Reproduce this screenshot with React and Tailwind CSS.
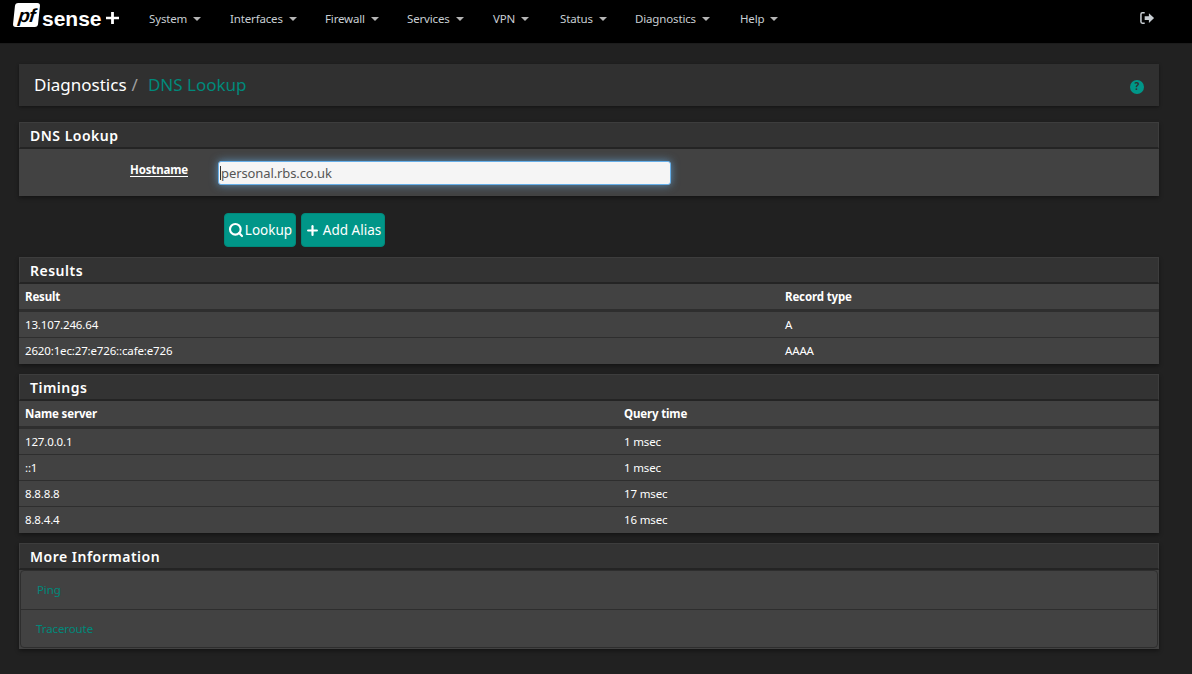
import { Search, Plus } from "lucide-react";

const menu = [
  ["System", "w-[81px]"],
  ["Interfaces", "w-[95px]"],
  ["Firewall", "w-[82px]"],
  ["Services", "w-[86px]"],
  ["VPN", "w-[67px]"],
  ["Status", "w-[75px]"],
  ["Diagnostics", "w-[105px]"],
  ["Help", "w-[60px]"],
];

function Heading({ children }) {
  return (
    <div className="h-[27px] bg-[#333333] border border-[#3d3d3d] border-b-2 border-b-[#242424] pl-[10px] flex items-center text-[14px] font-semibold tracking-[0.5px] text-white">
      {children}
    </div>
  );
}

function DataTable({ split, head, rows }) {
  return (
    <div className="bg-[#424242] text-[11.5px] tracking-[-0.15px] text-white">
      <div className="h-[28px] flex items-center border-b-[3px] border-[#2e2e2e] font-bold pl-[6px]">
        <div className={split}>{head[0]}</div>
        <div>{head[1]}</div>
      </div>
      {rows.map((r) => (
        <div key={r[0]} className="h-[26px] flex items-center border-b border-[#2e2e2e] last:border-b-0 pl-[6px]">
          <div className={split}>{r[0]}</div>
          <div>{r[1]}</div>
        </div>
      ))}
    </div>
  );
}

export default function App() {
  return (
    <div className="min-h-[674px] bg-[#212121] font-['Noto_Sans','Open_Sans',sans-serif]">
      <nav className="h-[44px] bg-black border-b border-[#1c1c1c] flex items-center pl-[14px]">
        <div className="w-[122px] flex items-center h-[28px] -mt-[7px]">
          <div className="w-[25px] h-[24px] mb-[6px] bg-white rounded-[3px] -skew-x-6 flex items-center justify-center">
            <span className="text-black italic font-bold text-[19px] leading-none font-['Liberation_Sans',sans-serif] tracking-[-1px]">pf</span>
          </div>
          <span className="text-white font-bold text-[21px] leading-none ml-[3px] font-['Liberation_Sans',sans-serif]">sense</span>
          <svg width="13" height="12" viewBox="0 0 14 14" preserveAspectRatio="none" className="ml-[4px]">
            <path d="M5.5 0h3v5.5H14v3H8.5V14h-3V8.5H0v-3h5.5z" fill="#fff" />
          </svg>
        </div>
        <div className="flex items-center -mt-[5px] text-[11.5px] tracking-[-0.15px] text-[#c8ced3]">
          {menu.map(([label, w]) => (
            <div key={label} className={`${w} pl-[13px] flex items-center`}>
              {label}
              <span className="ml-[6px] w-0 h-0 border-x-[4px] border-x-transparent border-t-[4px] border-t-[#b5b5b5]" />
            </div>
          ))}
        </div>
        <div className="ml-auto mr-[37px] -mt-[8px]">
          <svg width="15" height="14" viewBox="0 0 16 14" fill="none">
            <path d="M5 1.5H2.5Q1 1.5 1 3v8q0 1.5 1.5 1.5H5" stroke="#c8ced3" strokeWidth="1.6" />
            <path d="M5 5h4.5V1.8L15 7l-5.5 5.2V9H5z" fill="#c8ced3" />
          </svg>
        </div>
      </nav>

      <main className="px-[19px] pr-[33px] pt-[20px]">
        <div className="h-[42px] bg-[#303030] shadow-[0_1px_3px_rgba(0,0,0,0.4)] flex items-center pl-[15px] pr-[15px] text-[17px]">
          <span className="text-white">Diagnostics</span>
          <span className="text-[#a0a0a0] ml-[5px]">/</span>
          <span className="text-[#00897b] ml-[10px]">DNS Lookup</span>
          <span className="ml-auto mt-[3px] w-[14px] h-[14px] rounded-full bg-[#009688] text-[#303030] text-[10px] font-bold flex items-center justify-center">?</span>
        </div>

        <section className="mt-[16px] shadow-[0_2px_4px_rgba(0,0,0,0.4)]">
          <Heading>DNS Lookup</Heading>
          <div className="h-[47px] bg-[#424242] flex items-center">
            <label className="w-[169px] text-right text-[11.5px] tracking-[-0.15px] font-bold text-white underline underline-offset-2 -mt-[6px]">Hostname</label>
            <div className="relative ml-[30px]">
              <input
                readOnly
                value="personal.rbs.co.uk"
                className="block w-[453px] h-[24px] bg-[#f5f5f5] rounded-[3px] border border-[#66afe9] shadow-[0_0_8px_rgba(102,175,233,0.7)] pl-[2px] pt-[1px] text-[13px] tracking-[-0.1px] text-[#555555] outline-none"
              />
              <span className="absolute left-[2px] top-[5px] w-px h-[14px] bg-[#333333]" />
            </div>
          </div>
        </section>

        <div className="mt-[17px] ml-[205px] flex gap-[5px] text-[13.5px] text-white">
          <button className="h-[34px] w-[72px] bg-[#009688] rounded-[4px] border border-[#00897b] flex items-center justify-center">
            <Search size={16} strokeWidth={3.2} className="mr-[1px]" />
            Lookup
          </button>
          <button className="h-[34px] w-[84px] bg-[#009688] rounded-[4px] border border-[#00897b] flex items-center justify-center">
            <Plus size={15} strokeWidth={3.5} className="mr-[3px]" />
            Add Alias
          </button>
        </div>

        <section className="mt-[10px] shadow-[0_2px_4px_rgba(0,0,0,0.4)]">
          <Heading>Results</Heading>
          <DataTable
            split="w-[760px]"
            head={["Result", "Record type"]}
            rows={[
              ["13.107.246.64", "A"],
              ["2620:1ec:27:e726::cafe:e726", "AAAA"],
            ]}
          />
        </section>

        <section className="mt-[10px] shadow-[0_2px_4px_rgba(0,0,0,0.4)]">
          <Heading>Timings</Heading>
          <DataTable
            split="w-[599px]"
            head={["Name server", "Query time"]}
            rows={[
              ["127.0.0.1", "1 msec"],
              ["::1", "1 msec"],
              ["8.8.8.8", "17 msec"],
              ["8.8.4.4", "16 msec"],
            ]}
          />
        </section>

        <section className="mt-[10px] shadow-[0_2px_4px_rgba(0,0,0,0.4)]">
          <Heading>More Information</Heading>
          <div className="bg-[#424242] px-[1px] pb-[1px]">
            <div className="border border-[#2e2e2e] rounded-[4px] text-[11.5px] tracking-[-0.1px] text-[#00897b]">
              <div className="h-[39px] flex items-center pl-[16px] border-b border-[#2e2e2e]">Ping</div>
              <div className="h-[37px] flex items-center pl-[15px]">Traceroute</div>
            </div>
          </div>
        </section>
      </main>
    </div>
  );
}
